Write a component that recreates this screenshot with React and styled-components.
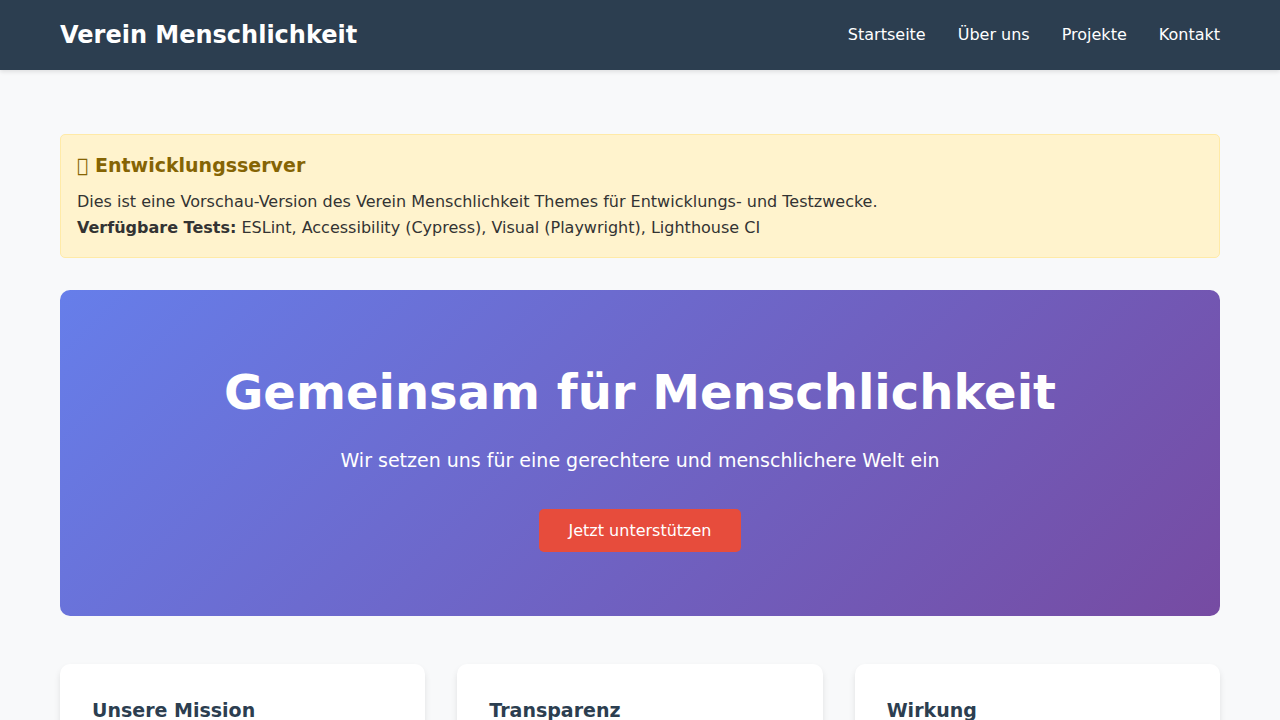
import React from "react";
import styled, { createGlobalStyle } from "styled-components";

const GlobalStyle = createGlobalStyle`
  *, *::before, *::after {
    box-sizing: border-box;
    margin: 0;
    padding: 0;
  }

  body {
    background: #f8f9fa;
    color: #333;
    font-family: "DejaVu Sans", sans-serif;
    font-size: 16px;
    line-height: 26px;
  }
`;

const Container = styled.div`
  max-width: 1200px;
  margin: 0 auto;
  padding: 0 20px;
`;

const Header = styled.header`
  background: #2c3e50;
  color: #fff;
  padding: 16px 0;
  box-shadow: 0 2px 4px rgba(0, 0, 0, 0.1);
`;

const HeaderRow = styled(Container)`
  display: flex;
  flex-wrap: wrap;
  justify-content: space-between;
  align-items: center;
`;

const Brand = styled.div`
  font-size: 24px;
  font-weight: 700;
  line-height: 38px;
`;

const NavList = styled.ul`
  display: flex;
  flex-wrap: wrap;
  gap: 0 32px;
  list-style: none;
`;

const NavLink = styled.a`
  color: #fff;
  text-decoration: none;

  &:hover {
    text-decoration: underline;
  }
`;

const Main = styled.main`
  padding: 64px 0;
`;

const Notice = styled.section`
  background: #fff3cd;
  border: 1px solid #ffeaa7;
  border-radius: 5px;
  padding: 16px;
  margin-bottom: 32px;
`;

const SectionTitle = styled.h3`
  color: ${({ $tone }) => ($tone === "warning" ? "#856404" : "#2c3e50")};
  font-size: 19px;
  line-height: 28px;
`;

const NoticeTitle = styled(SectionTitle)`
  margin-bottom: 10px;
`;

const Hero = styled.section`
  background: linear-gradient(135deg, #667eea 0%, #764ba2 100%);
  border-radius: 10px;
  color: #fff;
  padding: 64px 32px;
  margin-bottom: 48px;
  text-align: center;
`;

const HeroTitle = styled.h1`
  font-size: 48px;
  line-height: 77px;
  margin-bottom: 16px;
`;

const HeroText = styled.p`
  font-size: 19px;
  line-height: 26px;
  margin-bottom: 36px;
`;

const PrimaryButton = styled.button`
  display: block;
  margin: 0 auto;
  padding: 12px 30px;
  background: #e74c3c;
  border: 0;
  border-radius: 5px;
  color: #fff;
  cursor: pointer;
  font: inherit;
  line-height: 19px;

  &:hover {
    background: #c0392b;
  }
`;

const CardGrid = styled.div`
  display: grid;
  grid-template-columns: repeat(auto-fit, minmax(300px, 1fr));
  gap: 32px;
`;

const Card = styled.article`
  background: #fff;
  border-radius: 10px;
  box-shadow: 0 4px 6px rgba(0, 0, 0, 0.1);
  padding: 32px;
`;

const navItems = [
  { label: "Startseite", href: "#startseite" },
  { label: "Über uns", href: "#ueber-uns" },
  { label: "Projekte", href: "#projekte" },
  { label: "Kontakt", href: "#kontakt" },
];

const cards = ["Unsere Mission", "Transparenz", "Wirkung"];

export default function App() {
  return (
    <>
      <GlobalStyle />
      <Header>
        <HeaderRow>
          <Brand>Verein Menschlichkeit</Brand>
          <nav>
            <NavList>
              {navItems.map(({ label, href }) => (
                <li key={href}>
                  <NavLink href={href}>{label}</NavLink>
                </li>
              ))}
            </NavList>
          </nav>
        </HeaderRow>
      </Header>
      <Main>
        <Container>
          <Notice>
            <NoticeTitle $tone="warning">{"\u{10FFF0}"} Entwicklungsserver</NoticeTitle>
            <p>
              Dies ist eine Vorschau-Version des Verein Menschlichkeit Themes
              für Entwicklungs- und Testzwecke.
            </p>
            <p>
              <strong>Verfügbare Tests:</strong> ESLint, Accessibility
              (Cypress), Visual (Playwright), Lighthouse CI
            </p>
          </Notice>
          <Hero>
            <HeroTitle>Gemeinsam für Menschlichkeit</HeroTitle>
            <HeroText>
              Wir setzen uns für eine gerechtere und menschlichere Welt ein
            </HeroText>
            <PrimaryButton type="button">Jetzt unterstützen</PrimaryButton>
          </Hero>
          <CardGrid>
            {cards.map((title) => (
              <Card key={title}>
                <SectionTitle>{title}</SectionTitle>
              </Card>
            ))}
          </CardGrid>
        </Container>
      </Main>
    </>
  );
}
